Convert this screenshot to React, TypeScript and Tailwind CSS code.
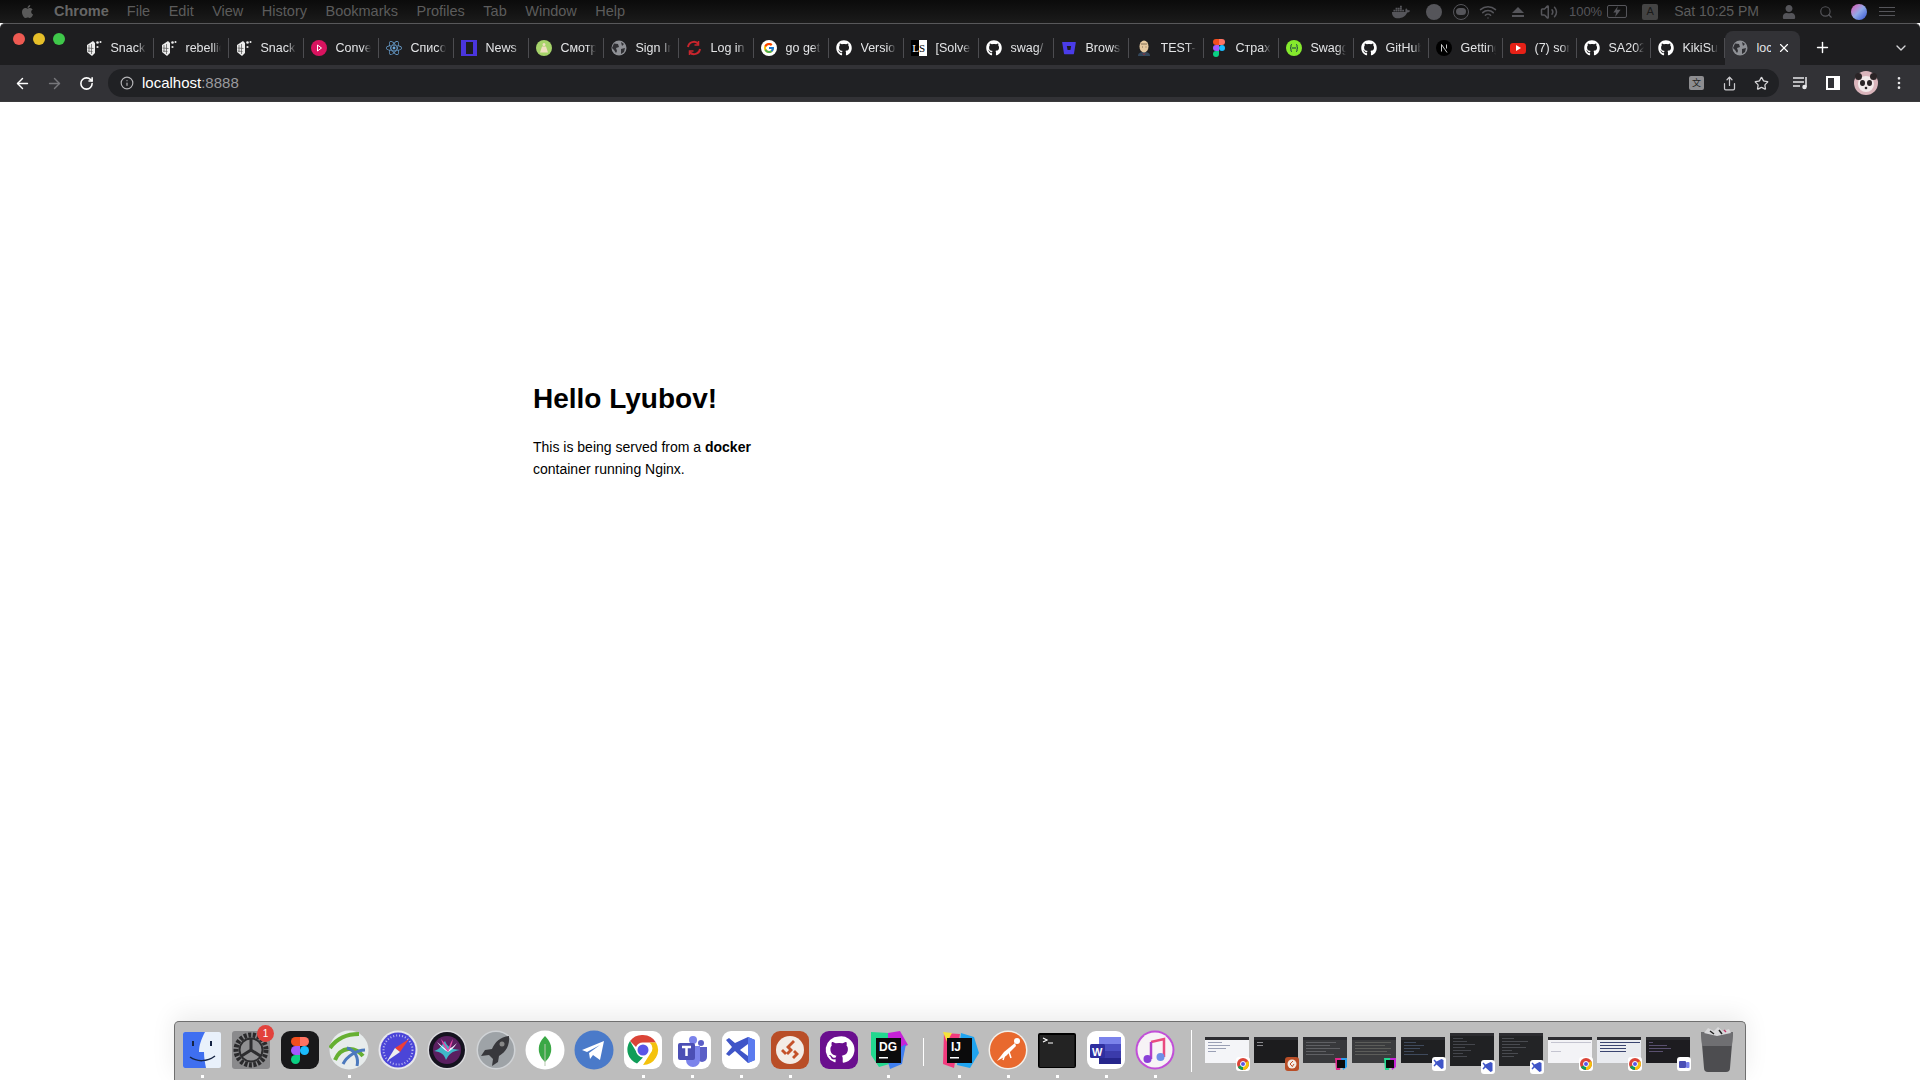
import type { ReactNode } from "react";
import {
  ArrowLeft,
  ArrowRight,
  ChevronDown,
  EllipsisVertical,
  Info,
  Plus,
  RotateCw,
  Search,
  Share,
  Star,
  Volume2,
  Wifi,
  X,
} from "lucide-react";
import { FaApple, FaBitbucket, FaDocker, FaGithub, FaReact, FaUser } from "react-icons/fa";
import { FcGoogle } from "react-icons/fc";

const font = "font-['Liberation_Sans',Arial,sans-serif]";

// ---- favicons ----
function SnackIcon() {
  return (
    <svg viewBox="0 0 16 18" className="h-[18px] w-4">
      <path d="M1 6l6-4 2 2v10l-3 3-5-4z" fill="#ececec" />
      <path d="M3 6v7M5.500 5v10M1.500 9l6 .5M1.500 12l5 .5" stroke="#555" strokeWidth="0.7" />
      <circle cx="11.500" cy="3.500" r="1.300" fill="#eee" />
      <circle cx="14.500" cy="3" r="1" fill="#eee" />
      <circle cx="11.500" cy="8" r="1.100" fill="#ddd" />
    </svg>
  );
}

function Circle({ color, children }: { color: string; children?: ReactNode }) {
  return (
    <svg viewBox="0 0 16 16" className="h-4 w-4">
      <circle cx="8" cy="8" r="8" fill={color} />
      {children}
    </svg>
  );
}

function GlobeIcon() {
  return (
    <svg viewBox="0 0 16 16" className="h-4 w-4">
      <circle cx="8" cy="8" r="7.500" fill="#8f9196" />
      <path d="M3 3.500l4 .5 1 3-3 1 1 3-1 2-2-3-2-2zM10 2l3 2-2 2zM10 9l4-1-1 4-3 2z" fill="#2f2f33" />
    </svg>
  );
}

function FigmaIcon() {
  return (
    <svg viewBox="0 0 12 18" className="h-[18px] w-3">
      <path d="M3 0h3v6H3a3 3 0 010-6z" fill="#f24e1e" />
      <path d="M6 0h3a3 3 0 010 6H6z" fill="#ff7262" />
      <path d="M3 6h3v6H3a3 3 0 010-6z" fill="#a259ff" />
      <circle cx="9" cy="9" r="3" fill="#1abcfe" />
      <path d="M3 12h3v3a3 3 0 11-3-3z" fill="#0acf83" />
    </svg>
  );
}

const tabs: { title: string; icon: ReactNode }[] = [
  { title: "Snack", icon: <SnackIcon /> },
  { title: "rebellion", icon: <SnackIcon /> },
  { title: "Snack", icon: <SnackIcon /> },
  {
    title: "Convertio",
    icon: (
      <Circle color="#d9135f">
        <path d="M6.500 5l4 3-4 3z" fill="none" stroke="#fff" strokeWidth="1" />
      </Circle>
    ),
  },
  { title: "Список", icon: <FaReact className="h-4 w-4 text-[#6da6d8]" /> },
  {
    title: "News",
    icon: (
      <div className="flex h-4 w-4 items-center justify-center bg-[#4a35dd]">
        <div className="h-3 w-[7px] bg-[#1e1e20]" />
      </div>
    ),
  },
  {
    title: "Смотреть",
    icon: (
      <Circle color="#a6d36a">
        <path d="M8 3a1.500 1.500 0 110 3 1.500 1.500 0 010-3zM6 6.500h4l2 6H4z" fill="#f0dfc0" />
      </Circle>
    ),
  },
  { title: "Sign In", icon: <GlobeIcon /> },
  {
    title: "Log in",
    icon: (
      <svg viewBox="0 0 16 16" className="h-4 w-4" fill="none" stroke="#c9252d" strokeWidth="2">
        <path d="M2 7a6 6 0 0110.500-3M14 9a6 6 0 01-10.500 3" />
        <path d="M12.500 1v4h-4M3.500 15v-4h4" strokeWidth="1.500" />
      </svg>
    ),
  },
  {
    title: "go get",
    icon: (
      <div className="flex h-4 w-4 items-center justify-center rounded-full bg-white">
        <FcGoogle className="h-3 w-3" />
      </div>
    ),
  },
  { title: "Versions", icon: <FaGithub className="h-4 w-4 text-white" /> },
  {
    title: "[Solved]",
    icon: (
      <div className="flex h-4 w-4 text-[11px] leading-4 font-['Liberation_Serif',serif]">
        <span className="w-2 bg-black text-right text-white">L</span>
        <span className="w-2 bg-white text-black">S</span>
      </div>
    ),
  },
  { title: "swag/", icon: <FaGithub className="h-4 w-4 text-white" /> },
  { title: "Browse", icon: <FaBitbucket className="h-[14px] w-[14px] text-[#4a3ce8]" /> },
  {
    title: "TEST-",
    icon: (
      <svg viewBox="0 0 16 16" className="h-4 w-4">
        <path d="M2 16c0-3 2-4 6-4s6 1 6 4z" fill="#33475b" />
        <ellipse cx="8" cy="6.500" rx="4.500" ry="6" fill="#e6c9a0" />
        <path d="M5 4h6M6 7h1M9.500 7h1" stroke="#6b5a45" strokeWidth="0.800" />
        <path d="M6 13l2 1 2-1-2 2z" fill="#b3262c" />
      </svg>
    ),
  },
  { title: "Страх", icon: <FigmaIcon /> },
  {
    title: "Swagger",
    icon: (
      <Circle color="#85ea2d">
        <path d="M6 4.500c-1.500 0-1 1.500-1 2.500s-1 1-1 1 1 0 1 1-.5 2.500 1 2.500M10 4.500c1.500 0 1 1.500 1 2.500s1 1 1 1-1 0-1 1 .5 2.500-1 2.500M6 8h4" fill="none" stroke="#173647" strokeWidth="1" />
      </Circle>
    ),
  },
  { title: "GitHub", icon: <FaGithub className="h-4 w-4 text-white" /> },
  {
    title: "Getting",
    icon: (
      <Circle color="#000">
        <path d="M5.500 11.500v-7l5.500 8M10.500 4.500v4" fill="none" stroke="#ddd" strokeWidth="0.900" />
      </Circle>
    ),
  },
  {
    title: "(7) song",
    icon: (
      <div className="flex h-[11px] w-4 items-center justify-center rounded-[3px] bg-[#e62117]">
        <div className="h-0 w-0 border-y-[3px] border-l-[5px] border-y-transparent border-l-white" />
      </div>
    ),
  },
  { title: "SA2022", icon: <FaGithub className="h-4 w-4 text-white" /> },
  { title: "KikiSun", icon: <FaGithub className="h-4 w-4 text-white" /> },
];

function MenuBar() {
  const items = ["File", "Edit", "View", "History", "Bookmarks", "Profiles", "Tab", "Window", "Help"];
  return (
    <div className="flex h-[23px] items-center bg-gradient-to-b from-[#0b0b0b] to-[#1b1b1b] text-[14.500px] text-[#5c5c5c]">
      <FaApple className="ml-[20px] h-[15px] w-[15px] text-[#5a5a5a]" />
      <span className="ml-[19px] font-bold text-[#666]">Chrome</span>
      <div className="ml-[18px] flex gap-[18.500px]">
        {items.map((item) => (
          <span key={item}>{item}</span>
        ))}
      </div>
      <div className="ml-auto flex items-center">
        <FaDocker className="h-[18px] w-[18px] text-[#55555a]" />
        <div className="ml-[16px] h-4 w-4 rounded-full bg-[#55555a]" />
        <div className="ml-[11px] flex h-4 w-4 items-center justify-center rounded-full border border-[#55555a]">
          <div className="h-[7px] w-[10px] rounded-full bg-[#55555a]" />
        </div>
        <Wifi className="ml-[10px] h-[18px] w-[18px] text-[#55555a]" />
        <div className="ml-[15px] flex flex-col items-center gap-[2px]">
          <div className="h-0 w-0 border-x-[6px] border-b-[6px] border-x-transparent border-b-[#55555a]" />
          <div className="h-[2px] w-3 bg-[#55555a]" />
        </div>
        <Volume2 className="ml-[16px] h-[18px] w-[18px] text-[#55555a]" />
        <span className="ml-[11px] text-[13px] text-[#55555a]">100%</span>
        <div className="ml-[5px] flex h-[13px] w-[20px] items-center justify-center rounded-[2px] border border-[#55555a]">
          <svg viewBox="0 0 10 12" className="h-[11px] w-[10px]">
            <path d="M6 0L1 7h3l-1 5 6-8H5z" fill="#55555a" />
          </svg>
        </div>
        <div className="ml-[15px] flex h-4 w-4 items-center justify-center rounded-[2px] bg-[#444] text-[11px] text-[#1a1a1a]">A</div>
        <span className="ml-[16px] text-[14px]">Sat 10:25 PM</span>
        <FaUser className="ml-[23px] h-[14px] w-[14px] text-[#55555a]" />
        <Search className="ml-[23px] h-[14px] w-[14px] text-[#55555a]" />
        <div className="ml-[18px] h-4 w-4 rounded-full bg-gradient-to-br from-[#d64bb0] via-[#8fa8e8] to-[#3a4fd0]" />
        <div className="ml-[12px] mr-[25px] flex w-[16px] flex-col gap-[3px]">
          <div className="h-px bg-[#55555a]" />
          <div className="h-px bg-[#55555a]" />
          <div className="h-px bg-[#55555a]" />
        </div>
      </div>
    </div>
  );
}

function TabStrip() {
  return (
    <div className="flex h-[42px] items-end rounded-t-[5px] border-t border-[#58585a] bg-[#1e1e20] pl-[12.500px]">
      <div className="mr-[12px] mb-[11px] flex gap-[8px] self-center">
        <div className="h-3 w-3 rounded-full bg-[#ee5a52]" />
        <div className="h-3 w-3 rounded-full bg-[#e6bf29]" />
        <div className="h-3 w-3 rounded-full bg-[#3fc84a]" />
      </div>
      <div className="ml-[2px] flex h-[34px]">
        {tabs.map((tab, i) => (
          <div key={i} className={`flex h-[34px] items-center pl-[7px] ${i >= 18 ? "w-[74px]" : "w-[75px]"}`}>
            <div className="flex w-[17px] shrink-0 items-center justify-center">{tab.icon}</div>
            <span className="ml-[8px] w-[35px] overflow-hidden whitespace-nowrap text-[12.500px] text-[#e3e4e6] [mask-image:linear-gradient(to_right,black_75%,transparent)]">
              {tab.title}
            </span>
            <div className="ml-auto h-[20px] w-px bg-[#4c4c50]" />
          </div>
        ))}
        <div className="flex h-[34px] w-[75px] items-center rounded-t-[8px] bg-[#323236] pl-[7px]">
          <div className="flex w-[17px] shrink-0 items-center justify-center">
            <GlobeIcon />
          </div>
          <span className="ml-[8px] w-[14px] overflow-hidden whitespace-nowrap text-[12.500px] text-[#e3e4e6]">localhost</span>
          <X className="ml-[6px] h-[14px] w-[14px] text-white" />
        </div>
      </div>
      <Plus className="mb-[9px] ml-[14px] h-[17px] w-[17px] text-white" />
      <ChevronDown className="mb-[9px] ml-[62px] h-4 w-4 text-[#d5d5d7]" />
    </div>
  );
}

function Toolbar() {
  return (
    <div className="flex h-[36px] items-center bg-[#323236] pl-[14px]">
      <ArrowLeft className="h-[17px] w-[17px] text-white" />
      <ArrowRight className="ml-[15px] h-[17px] w-[17px] text-[#77777b]" />
      <RotateCw className="ml-[16px] h-[15px] w-[15px] text-white" strokeWidth={2.5} />
      <div className="ml-[14px] flex h-[28px] flex-1 items-center rounded-full bg-[#202124] pl-[12px] pr-[10px]">
        <Info className="h-[14px] w-[14px] text-[#b5b5b8]" />
        <span className="ml-[8px] text-[15px] text-white">localhost</span>
        <span className="text-[15px] text-[#9a9a9e]">:8888</span>
        <div className="ml-auto flex items-center gap-[17px]">
          <div className="mr-px flex h-[14px] w-[15px] items-center justify-center rounded-[2px] bg-[#8d8d90] text-[9px] text-[#222] font-['Noto_Sans_CJK_SC',sans-serif]">文</div>
          <Share className="h-[15px] w-[15px] text-[#c9c9cc]" />
          <Star className="h-[15px] w-[15px] text-[#d8d8da]" />
        </div>
      </div>
      <div className="ml-[14px] flex items-center">
        <svg viewBox="0 0 16 14" className="h-[14px] w-4" fill="none" stroke="#e8e8ea" strokeWidth="1.500">
          <path d="M0 2h11M0 6h11M0 10h7M13 1v10" />
          <circle cx="11.500" cy="11" r="1.500" fill="#e8e8ea" />
        </svg>
        <div className="ml-[17px] flex h-[14px] w-[14px] justify-end border-2 border-white">
          <div className="h-full w-1 bg-white" />
        </div>
        <svg viewBox="0 0 24 24" className="ml-[14px] h-6 w-6">
          <circle cx="12" cy="12" r="12" fill="#d9b4bb" />
          <circle cx="12" cy="13" r="8" fill="#f2e9ea" />
          <circle cx="4.500" cy="5.500" r="3.500" fill="#2a2426" />
          <circle cx="19.500" cy="5.500" r="3.500" fill="#2a2426" />
          <ellipse cx="8.500" cy="12" rx="2.500" ry="3" fill="#2a2426" />
          <ellipse cx="15.500" cy="12" rx="2.500" ry="3" fill="#2a2426" />
          <circle cx="12" cy="17" r="1.300" fill="#2a2426" />
        </svg>
        <EllipsisVertical className="ml-[13px] mr-[13px] h-4 w-4 text-[#e8e8ea]" />
      </div>
    </div>
  );
}

// ---- dock ----
function Tile({ bg, children }: { bg: string; children?: ReactNode }) {
  return (
    <svg viewBox="0 0 40 40" className="h-10 w-10">
      <rect x="1" y="1" width="38" height="38" rx="9" fill={bg} />
      {children}
    </svg>
  );
}

function Round({ bg, children }: { bg: string; children?: ReactNode }) {
  return (
    <svg viewBox="0 0 40 40" className="h-10 w-10">
      <circle cx="20" cy="20" r="19.500" fill={bg} />
      {children}
    </svg>
  );
}

const FinderIcon = (
  <svg viewBox="0 0 40 40" className="h-10 w-10">
    <rect x="1" y="2" width="38" height="36" rx="2" fill="#e9f1fb" />
    <path d="M3 2h20c-4 8-6 13-6 20h5c0 6 1 11 2 16H3a2 2 0 01-2-2V4a2 2 0 012-2z" fill="#3f6ff0" />
    <path d="M11 11v5M29 11v5" stroke="#152444" strokeWidth="2" />
    <path d="M8 27c7 5 17 5 25-1" fill="none" stroke="#152444" strokeWidth="1.500" />
  </svg>
);

const SettingsIcon = (
  <svg viewBox="0 0 40 40" className="h-10 w-10">
    <rect x="1" y="1" width="38" height="38" rx="3" fill="#8a8a8c" />
    <circle cx="20" cy="20" r="15" fill="none" stroke="#2a2a2c" strokeWidth="5" strokeDasharray="3 1.500" />
    <circle cx="20" cy="20" r="11.500" fill="#8f8f91" stroke="#2d2d2f" strokeWidth="2" />
    <path d="M20 20V9M20 20l-9.500 6M20 20l9.500 6" stroke="#2d2d2f" strokeWidth="3" />
  </svg>
);

const dockApps: { icon: ReactNode; dot?: boolean; badge?: string }[] = [
  { icon: FinderIcon, dot: true },
  { icon: SettingsIcon, badge: "1" },
  {
    icon: (
      <Tile bg="#18181a">
        <g transform="translate(11 7) scale(1.500)">
          <path d="M3 0h3v6H3a3 3 0 010-6z" fill="#f24e1e" />
          <path d="M6 0h3a3 3 0 010 6H6z" fill="#ff7262" />
          <path d="M3 6h3v6H3a3 3 0 010-6z" fill="#a259ff" />
          <circle cx="9" cy="9" r="3" fill="#1abcfe" />
          <path d="M3 12h3v3a3 3 0 11-3-3z" fill="#0acf83" />
        </g>
      </Tile>
    ),
  },
  {
    icon: (
      <Round bg="#e7ecec">
        <path d="M1 18C8 8 18 4 30 4M6 30c6-14 20-14 28-4" fill="none" stroke="#66b032" strokeWidth="4" />
        <path d="M18 18c8 2 12 10 10 18M14 34c4-8 14-14 22-14" fill="none" stroke="#4b79bd" strokeWidth="3" />
      </Round>
    ),
    dot: true,
  },
  {
    icon: (
      <Round bg="#e8e8ec">
        <circle cx="20" cy="20" r="17.500" fill="#4b45d8" />
        <circle cx="20" cy="20" r="14.500" fill="none" stroke="#b9b8f0" strokeWidth="2" strokeDasharray="1 2" />
        <path d="M31 9L17 18l5 4z" fill="#ef3e36" />
        <path d="M9 31l8-13 5 4z" fill="#eeeeee" />
      </Round>
    ),
  },
  {
    icon: (
      <Round bg="#d9d9dc">
        <circle cx="20" cy="20" r="18" fill="#15131f" />
        <circle cx="20" cy="20" r="14" fill="#5a1f60" />
        <path d="M7 21c6-1 9-8 11-10 2 5 5 8 15 9-8 1-11 4-14 10-2-6-5-8-12-9z" fill="#3fb8c8" />
        <path d="M10 12c4 3 7 6 10 8 4-2 7-4 10-7-3 5-6 7-9 9-4-2-8-6-11-10z" fill="#f2f2ff" />
        <path d="M14 9c3 3 6 8 7 11 1-3 2-7 5-11-1 6-3 10-5 13-3-3-5-7-7-13z" fill="#e04aa8" />
      </Round>
    ),
  },
  {
    icon: (
      <Round bg="#d0d3d6">
        <circle cx="20" cy="20" r="18" fill="#9ea3a7" />
        <path d="M33 6c-9 1-14 6-17 13l-7 1-4 6 8-1 4 4-1 7 6-4 1-6c7-4 11-11 10-20z" fill="#38383c" />
        <circle cx="26" cy="14" r="2.500" fill="#888" />
      </Round>
    ),
  },
  {
    icon: (
      <Round bg="#ffffff">
        <LeafPath />
      </Round>
    ),
  },
  {
    icon: (
      <Round bg="#4a7ac9">
        <path d="M8 20l22-9-4 19-7-5-3 4-1-6 11-8-13 7z" fill="#fff" />
      </Round>
    ),
  },
  {
    icon: (
      <Tile bg="#ffffff">
        <path d="M20 5a15 15 0 0113 7.500H20a7.500 7.500 0 00-7 4.500L7 11A15 15 0 0120 5z" fill="#db4437" />
        <path d="M7 11l7 12a7.500 7.500 0 006 4.500L14 33.500A15 15 0 017 11z" fill="#0f9d58" />
        <path d="M33 12.500a15 15 0 01-13 22.500l7-11a7.500 7.500 0 00-.500-11.500z" fill="#f4c20d" />
        <circle cx="20" cy="20" r="7" fill="#fff" />
        <circle cx="20" cy="20" r="5.500" fill="#5a55e8" />
      </Tile>
    ),
    dot: true,
  },
  {
    icon: (
      <Tile bg="#ffffff">
        <circle cx="29" cy="13" r="3" fill="#5b5fc7" />
        <circle cx="21" cy="10" r="4" fill="#7b83eb" />
        <path d="M25 17h10v10a5 5 0 01-10 0z" fill="#5b5fc7" />
        <path d="M14 16h14v14a7 7 0 01-14 0z" fill="#7b83eb" />
        <rect x="6" y="13" width="17" height="17" rx="2" fill="#4b4fb5" />
        <path d="M10 17h9M14.500 17v9" stroke="#fff" strokeWidth="2.500" />
      </Tile>
    ),
    dot: true,
  },
  {
    icon: (
      <Tile bg="#ffffff">
        <path d="M27 7l7 3v20l-7 3-13-12-6 5-3-2 6-7-6-7 3-2 6 5z" fill="#3f55c8" />
        <path d="M27 7l7 3v20l-7 3z" fill="#5b7bef" />
        <path d="M27 14l-8 6 8 6z" fill="#fff" />
      </Tile>
    ),
    dot: true,
  },
  {
    icon: (
      <Tile bg="#b94e27">
        <circle cx="20" cy="20" r="14" fill="#f3ece6" />
        <path d="M23 10l-7 7 3 3-3 3 2 2 5-5-3-3 5-5zM25 20l-2 2 2 2-3 3 2 2 5-5z" fill="#c4522a" />
        <path d="M13 19l-2 2 4 4 2-2z" fill="#c4522a" />
      </Tile>
    ),
    dot: true,
  },
  {
    icon: (
      <Tile bg="#6a0f8e">
        <g transform="translate(6 6) scale(1.150)">
          <path
            d="M12 .5a11.500 11.500 0 00-3.600 22.400c.6.100.8-.3.800-.6v-2c-3.200.7-3.900-1.400-3.900-1.400-.5-1.300-1.300-1.700-1.300-1.700-1-.7.100-.7.100-.7 1.200.1 1.800 1.200 1.800 1.200 1 1.800 2.700 1.300 3.400 1 .1-.8.400-1.300.7-1.600-2.600-.3-5.300-1.300-5.300-5.700 0-1.300.5-2.300 1.200-3.100-.1-.3-.5-1.500.1-3.100 0 0 1-.3 3.300 1.200a11.500 11.500 0 016 0c2.300-1.500 3.300-1.200 3.300-1.200.6 1.600.2 2.800.1 3.100.8.800 1.200 1.900 1.200 3.100 0 4.400-2.700 5.400-5.300 5.700.4.400.8 1.100.8 2.200v3.300c0 .3.200.7.800.6A11.500 11.500 0 0012 .5z"
            fill="#ffffff"
          />
        </g>
      </Tile>
    ),
  },
  {
    icon: (
      <svg viewBox="0 0 40 40" className="h-10 w-10">
        <path d="M3 2l18 1 4 30-14 4-8-12z" fill="#22d88f" />
        <path d="M20 3l12-2 8 14-20 8z" fill="#c622d8" />
        <path d="M38 14l-4 20-12 5-4-14z" fill="#3f7ff0" />
        <rect x="8" y="8" width="25" height="25" fill="#0b0b0c" />
        <text x="11" y="21" fontSize="12" fontWeight="700" fill="#fff" fontFamily="Liberation Sans">DG</text>
        <rect x="11" y="27" width="9" height="1.500" fill="#fff" />
      </svg>
    ),
    dot: true,
  },
];

const dockApps2: { icon: ReactNode; dot?: boolean }[] = [
  {
    icon: (
      <svg viewBox="0 0 40 40" className="h-10 w-10">
        <path d="M5 3l16 1-6 34-11-4z" fill="#f23a7d" />
        <path d="M4 2l9 1-5 9z" fill="#f5e33b" />
        <path d="M22 3l13 4 5 16-9 15-13-3z" fill="#1fa4f0" />
        <rect x="8" y="8" width="25" height="25" fill="#0b0b0c" />
        <text x="12" y="21" fontSize="12" fontWeight="700" fill="#fff" fontFamily="Liberation Sans">IJ</text>
        <rect x="11" y="27" width="9" height="1.500" fill="#fff" />
      </svg>
    ),
    dot: true,
  },
  {
    icon: (
      <Round bg="#f4f0ea">
        <circle cx="20" cy="20" r="18" fill="#e8692e" />
        <circle cx="29" cy="11" r="3" fill="#fff" />
        <path d="M27 13L16 22l-7 9 9-5 10-10z" fill="#fff" />
        <path d="M17 24l-2 6M21 22l2 6" stroke="#fff" strokeWidth="1.500" />
      </Round>
    ),
    dot: true,
  },
  {
    icon: (
      <svg viewBox="0 0 40 40" className="h-10 w-10">
        <rect x="1" y="3" width="38" height="35" rx="2" fill="#000" />
        <rect x="2.500" y="5" width="35" height="32" fill="#232323" />
        <path d="M6 8l4 2-4 2" fill="none" stroke="#fff" strokeWidth="1.200" />
        <path d="M11 13h5" stroke="#ddd" strokeWidth="1.200" />
      </svg>
    ),
    dot: true,
  },
  {
    icon: (
      <Tile bg="#ffffff">
        <rect x="13" y="7" width="22" height="27" rx="2" fill="#4b4fc4" />
        <rect x="13" y="7" width="22" height="7" fill="#7b83eb" />
        <rect x="13" y="21" width="22" height="7" fill="#3b3bab" />
        <rect x="13" y="28" width="22" height="6" fill="#26268c" />
        <rect x="4" y="14" width="15" height="14" rx="1.500" fill="#2f2fa0" />
        <text x="6" y="25.500" fontSize="11" fontWeight="700" fill="#fff" fontFamily="Liberation Sans">W</text>
      </Tile>
    ),
    dot: true,
  },
  {
    icon: (
      <Round bg="#c14fd8">
        <circle cx="20" cy="20" r="17.500" fill="#f7f3f6" />
        <path d="M16 12l13-3v18" fill="none" stroke="#e94a7f" strokeWidth="2.500" />
        <path d="M16 12v17" stroke="#b340c8" strokeWidth="2.500" />
        <circle cx="12.500" cy="29" r="4" fill="#8a3fd8" />
        <circle cx="25.500" cy="27" r="4" fill="#6f8fe8" />
      </Round>
    ),
    dot: true,
  },
];

function LeafPath() {
  return (
    <g transform="translate(20 20)">
      <path d="M0-14C5-9 7-4 6 2 5 7 2 10 0 12-2 10-5 7-6 2-7-4-5-9 0-14z" fill="#3aa845" />
      <path d="M0-6V16" stroke="#b7c9b0" strokeWidth="1" />
    </g>
  );
}

const badge: Record<string, ReactNode> = {
  chrome: (
    <svg viewBox="0 0 14 14" className="h-[14px] w-[14px]">
      <rect width="14" height="14" rx="3" fill="#fff" />
      <circle cx="7" cy="7" r="6" fill="#db4437" />
      <path d="M7 7L1.800 10A6 6 0 007 13z" fill="#0f9d58" />
      <path d="M7 7v6a6 6 0 005.200-9z" fill="#f4c20d" />
      <circle cx="7" cy="7" r="2.500" fill="#5a55e8" stroke="#fff" />
    </svg>
  ),
  remote: (
    <svg viewBox="0 0 14 14" className="h-[14px] w-[14px]">
      <rect width="14" height="14" rx="3" fill="#b94e27" />
      <circle cx="7" cy="7" r="4.500" fill="#f3ece6" />
      <path d="M8 4L5 7l2 2M9 7L7 10" fill="none" stroke="#c4522a" strokeWidth="1" />
    </svg>
  ),
  jb: (
    <svg viewBox="0 0 14 14" className="h-[14px] w-[14px]">
      <path d="M1 1h7L6 13H2z" fill="#e0288c" />
      <path d="M7 1h6v9l-4 3z" fill="#2aa0f0" />
      <rect x="3" y="3" width="8" height="8" fill="#0b0b0c" />
    </svg>
  ),
  dg: (
    <svg viewBox="0 0 14 14" className="h-[14px] w-[14px]">
      <path d="M1 1h7L6 13H2z" fill="#22d88f" />
      <path d="M7 1h6v9l-4 3z" fill="#c622d8" />
      <rect x="3" y="3" width="8" height="8" fill="#0b0b0c" />
    </svg>
  ),
  code: (
    <svg viewBox="0 0 14 14" className="h-[14px] w-[14px]">
      <rect width="14" height="14" rx="3" fill="#fff" />
      <path d="M9.500 2l2 1v8l-2 1-5-4.500-2 2-1-.8 2-2.700-2-2.700 1-.8 2 2z" fill="#3f55c8" />
    </svg>
  ),
  teams: (
    <svg viewBox="0 0 14 14" className="h-[14px] w-[14px]">
      <rect width="14" height="14" rx="3" fill="#fff" />
      <rect x="2" y="4" width="7" height="7" rx="1" fill="#4b4fb5" />
      <rect x="9" y="5" width="3.500" height="6" rx="1" fill="#7b83eb" />
    </svg>
  ),
};

const thumbs: { bg: string; tall?: boolean; badge: string; line: string; widths: number[] }[] = [
  { bg: "bg-[#f4f5f8]", badge: "chrome", line: "bg-[#9aa0b5]", widths: [14, 22, 18, 8] },
  { bg: "bg-[#1c1c1e]", badge: "remote", line: "bg-[#8a8a8e]", widths: [6, 6] },
  { bg: "bg-[#38393c]", badge: "jb", line: "bg-[#5f6064]", widths: [30, 24, 34, 20, 28] },
  { bg: "bg-[#3b3c3e]", badge: "dg", line: "bg-[#5c5d5a]", widths: [36, 30, 36, 32, 36] },
  { bg: "bg-[#1f2022]", badge: "code", line: "bg-[#3f4a5c]", widths: [12, 20, 16, 10, 24] },
  { bg: "bg-[#202123]", tall: true, badge: "code", line: "bg-[#44464c]", widths: [10, 14, 22, 12, 18, 10, 14] },
  { bg: "bg-[#232426]", tall: true, badge: "code", line: "bg-[#494b50]", widths: [12, 26, 18, 24, 10, 16, 12] },
  { bg: "bg-[#f3f3f6]", badge: "chrome", line: "bg-[#c4c4d0]", widths: [40, 0, 0, 10] },
  { bg: "bg-[#e9ebf0]", badge: "chrome", line: "bg-[#3a4470]", widths: [40, 26, 26, 26] },
  { bg: "bg-[#1d1c20]", badge: "teams", line: "bg-[#5a5070]", widths: [4, 18, 22, 14] },
];

function DockCell({ icon, dot, count }: { icon: ReactNode; dot?: boolean; count?: string }) {
  return (
    <div className="flex w-[49px] flex-col items-center pt-[8px]">
      <div className="relative flex h-10 w-10 items-center justify-center">
        {icon}
        {count && (
          <div className="absolute -top-[5px] -right-[3px] flex h-[17px] w-[17px] items-center justify-center rounded-full bg-[#e2423c] text-[10px] text-white">
            {count}
          </div>
        )}
      </div>
      {dot && <div className="mt-[5px] h-[3px] w-[3px] bg-white" />}
    </div>
  );
}

function Dock() {
  return (
    <div className="mx-auto mt-auto flex h-[59px] w-[1572px] rounded-t-[5px] border border-b-0 border-[#6f6f6f] bg-[#bdbdbd] pl-[2.500px] shadow-[0_-6px_24px_rgba(0,0,0,0.08)]">
      {dockApps.map((app, i) => (
        <DockCell key={i} icon={app.icon} dot={app.dot} count={app.badge} />
      ))}
      <div className="flex w-[22px] justify-center pt-[16px]">
        <div className="h-[28px] w-px bg-white" />
      </div>
      {dockApps2.map((app, i) => (
        <DockCell key={i} icon={app.icon} dot={app.dot} />
      ))}
      <div className="flex w-[23px] justify-center pt-[8px]">
        <div className="h-[42px] w-px bg-white" />
      </div>
      {thumbs.map((t, i) => (
        <div key={i} className={`flex w-[49px] justify-center ${t.tall ? "pt-[11px]" : "pt-[15px]"}`}>
          <div className={`relative w-[44px] ${t.tall ? "h-[33px]" : "h-[26px]"} ${t.bg}`}>
            <div className="h-[3px] bg-[#2c2c30]" />
            <div className="flex flex-col gap-[2px] pl-[3px] pt-[2px]">
              {t.widths.map((w, j) => (
                <div key={j} className={`h-px ${t.line}`} style={{ width: w }} />
              ))}
            </div>
            <div className="absolute -right-[1px] -bottom-[8px]">{badge[t.badge]}</div>
          </div>
        </div>
      ))}
      <div className="flex w-[49px] justify-center pt-[4px]">
        <svg viewBox="0 0 34 46" className="h-[46px] w-[34px]">
          <path d="M1 6h32l-3 36a4 4 0 01-4 4H8a4 4 0 01-4-4z" fill="#4d4d50" />
          <path d="M1 6h32l-1 14H2z" fill="#6f6f72" />
          <path d="M4 7l4-5 6 3 4-4 5 4 6-2 2 4-14 3z" fill="#d8d8da" />
          <path d="M10 5l4 3M19 4l3 4" stroke="#222" strokeWidth="1.500" />
          <path d="M24 4l2 2" stroke="#c23a6a" strokeWidth="1.500" />
        </svg>
      </div>
    </div>
  );
}

export default function App() {
  return (
    <div className={`flex h-screen w-full flex-col overflow-hidden bg-white ${font}`}>
      <MenuBar />
      <TabStrip />
      <Toolbar />
      <div className="flex flex-1 flex-col border-t border-[#3a3a3c]">
        <div className="ml-[533px] mt-[279px] w-[240px] text-black">
          <h1 className="text-[28px] leading-[36px] font-bold">Hello Lyubov!</h1>
          <p className="mt-[19px] text-[14px] leading-[22px]">
            This is being served from a <b>docker</b> container running Nginx.
          </p>
        </div>
        <Dock />
      </div>
    </div>
  );
}
